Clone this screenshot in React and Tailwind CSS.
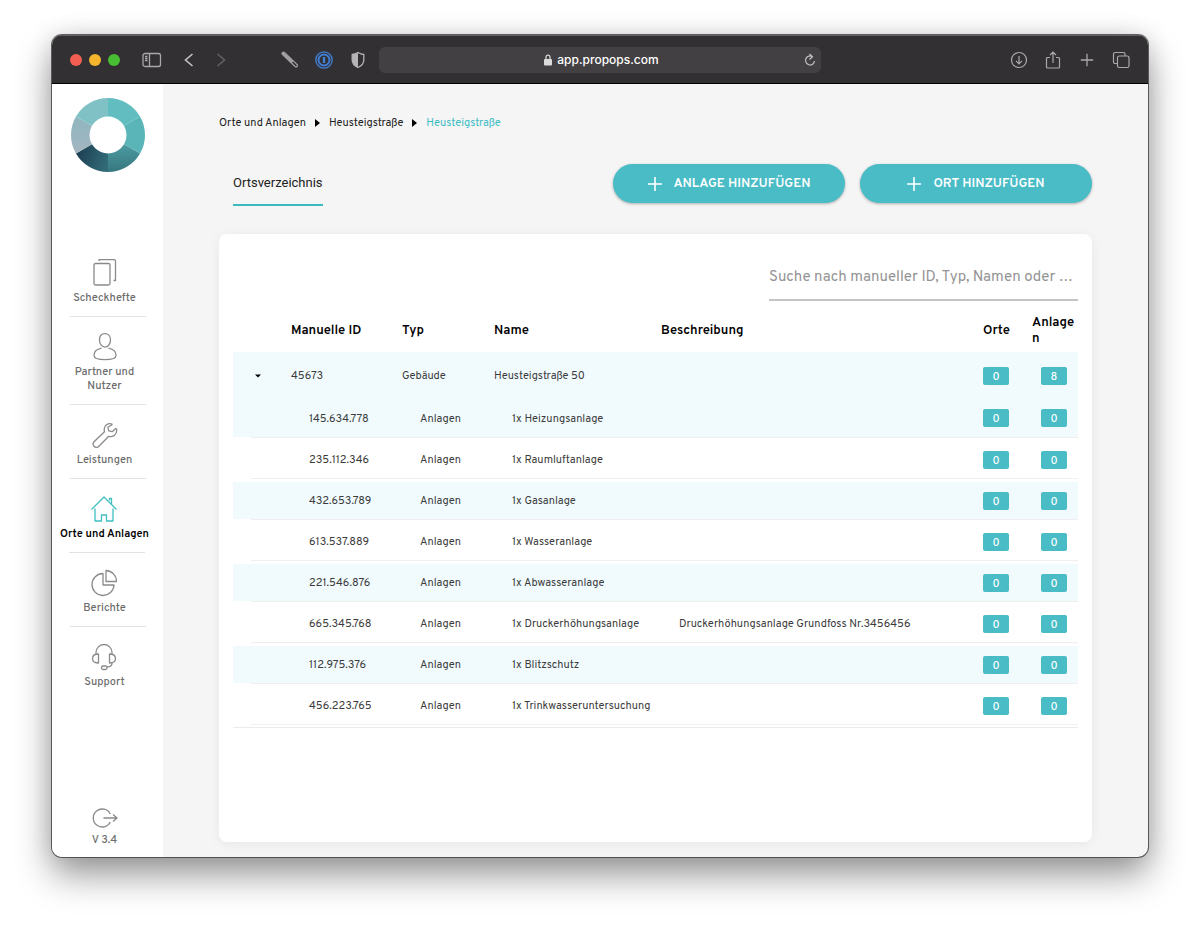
import { useState } from "react"

const navItems = [
    { label: "Scheckhefte", icon: "booklets" },
    { label: "Partner und Nutzer", icon: "person" },
    { label: "Leistungen", icon: "wrench" },
    { label: "Orte und Anlagen", icon: "house", active: true },
    { label: "Berichte", icon: "pie" },
    { label: "Support", icon: "headset" },
]

const assets = [
    { id: "145.634.778", name: "1x Heizungsanlage" },
    { id: "235.112.346", name: "1x Raumluftanlage" },
    { id: "432.653.789", name: "1x Gasanlage" },
    { id: "613.537.889", name: "1x Wasseranlage" },
    { id: "221.546.876", name: "1x Abwasseranlage" },
    { id: "665.345.768", name: "1x Druckerhöhungsanlage", description: "Druckerhöhungsanlage Grundfoss Nr.3456456" },
    { id: "112.975.376", name: "1x Blitzschutz" },
    { id: "456.223.765", name: "1x Trinkwasseruntersuchung" },
]

const iconPaths = {
    booklets: (
        <>
            <rect x="3" y="4.500" width="16" height="21.500" rx="1.500" />
            <path d="M8 2V.7h15a1.500 1.500 0 0 1 1.500 1.500V21.500h-2" />
        </>
    ),
    person: (
        <>
            <path d="M14 .7c3.300 0 5.500 2.600 5.500 6.200S17.200 14.200 14 14.200 8.500 10.700 8.500 6.900 10.700.7 14 .7z" />
            <path d="M10.500 15.200C6 16.200 3 18.700 3 22.200 3 25.200 8 26.700 14 26.700s11-1.500 11-4.500c0-3.500-3-6-7.500-7" />
        </>
    ),
    wrench: <path d="M21 3c-4-1.500-8 1.500-7.800 5.500 0 1 .2 1.600.3 2.200L3.300 20.500c-1.500 1.500-1.500 3.500-.3 4.800 1.400 1.400 3.600 1.300 4.900-.1L17.500 15.500c4.500 1 8.700-2 8.200-7.500l-1-.5-3.500 3.200-3.400-.9-1-3.600L21 3.800z" />,
    house: (
        <>
            <path d="M1.500 14.500 14 2l12.500 12.500M19.500 5.500V3.500h2v5.500" />
            <path d="M5 13.500V26h6.500v-6h5v6H23V13.500" />
        </>
    ),
    pie: (
        <>
            <path d="M13 4.500A11 11 0 1 0 24 16H13z" />
            <path d="M16 1.500V12.500h10.500A11 11 0 0 0 16 1.500z" />
        </>
    ),
    headset: (
        <>
            <path d="M6 11.500V9.500a8 8 0 0 1 16 0v2" />
            <path d="M8.500 11v9C5 20 2.500 18.500 2.500 15.500S5 11 8.500 11zM19.500 11v9c3.500 0 6-1.500 6-4.500S23 11 19.500 11z" />
            <path d="M22 20c0 2.500-1.500 4-5 4" />
            <rect x="11.500" y="23" width="5.500" height="3.500" rx="1.500" />
        </>
    ),
    logout: (
        <>
            <path d="M19.300 9a9 9 0 1 0 0 8" />
            <path d="M12.500 13H26M22 9.500 26 13l-4 3.500" />
        </>
    ),
}

const Icon = ({ name }) => (
    <svg viewBox="0 0 28 28" className="size-7" fill="none" stroke="currentColor" strokeWidth="1.300" strokeLinejoin="round" aria-hidden="true">
        {iconPaths[name]}
    </svg>
)

const Logo = () => (
    <svg viewBox="-37 -37 74 74" className="size-[74px]" role="img" aria-label="PropOps">
        <defs>
            <linearGradient id="deep" x1="0" y1="0" x2="0" y2="1">
                <stop offset="0" stopColor="#52a7ac" />
                <stop offset="1" stopColor="#37777f" />
            </linearGradient>
            <linearGradient id="navy" x1="0" y1="0.300" x2="1" y2="0.700">
                <stop offset="0" stopColor="#1b3b50" />
                <stop offset="1" stopColor="#326b78" />
            </linearGradient>
            <linearGradient id="mist" x1="0" y1="0" x2="0" y2="1">
                <stop offset="0" stopColor="#8fb6bf" />
                <stop offset="1" stopColor="#a3b5c0" />
            </linearGradient>
        </defs>
        <path d="M0 0V-37A37 37 0 0 1 32.040-18.500z" fill="#62bdc1" />
        <path d="M0 0 32.040-18.500A37 37 0 0 1 32.040 18.500z" fill="#5ab5b8" />
        <path d="M0 0 32.040 18.500A37 37 0 0 1 0 37z" fill="url(#deep)" />
        <path d="M0 0V37A37 37 0 0 1-32.040 18.500z" fill="url(#navy)" />
        <path d="M0 0-32.040 18.500A37 37 0 0 1-32.040-18.500z" fill="url(#mist)" />
        <path d="M0 0-32.040-18.500A37 37 0 0 1 0-37z" fill="#80c1c5" />
        <circle r="18.500" fill="#fff" />
    </svg>
)

const BrowserBar = () => (
    <div className="flex h-[49px] items-center border-t border-b border-t-[#626062] border-b-black bg-[#333033] text-[#aaa8aa]">
        <div className="flex flex-1 items-center pl-[18px]">
            <div className="flex gap-[7px]">
                <span className="size-3 rounded-full bg-[#f25e52]" />
                <span className="size-3 rounded-full bg-[#f5b62e]" />
                <span className="size-3 rounded-full bg-[#48be33]" />
            </div>
            <button aria-label="Seitenleiste" className="ml-[22px]">
                <svg viewBox="0 0 20 16" className="h-4 w-5" fill="none" stroke="currentColor" strokeWidth="1.300">
                    <rect x="1" y="1.500" width="17.500" height="13" rx="2" />
                    <path d="M7.500 1.500v13M3 4.500h2.500M3 6.500h2.500M3 8.500h2.500" />
                </svg>
            </button>
            <button aria-label="Zurück" className="ml-[22px]">
                <svg viewBox="0 0 10 16" className="h-4 w-[10px]" fill="none" stroke="#c5c3c5" strokeWidth="1.600">
                    <path d="m8.500 2-7 6 7 6" />
                </svg>
            </button>
            <button aria-label="Vorwärts" className="ml-[22px]">
                <svg viewBox="0 0 10 16" className="h-4 w-[10px]" fill="none" stroke="#626062" strokeWidth="1.600">
                    <path d="m1.500 2 7 6-7 6" />
                </svg>
            </button>
            <div className="ml-auto flex items-center gap-4 pr-3">
                <svg viewBox="0 0 18 18" className="size-[18px]" aria-hidden="true">
                    <path d="m2.500 2.500 12.500 12" stroke="#a09ea0" strokeWidth="4" strokeLinecap="round" />
                    <path d="m12 11.500 3 3" stroke="#333033" strokeWidth="1.600" strokeLinecap="round" />
                </svg>
                <svg viewBox="0 0 18 18" className="size-[18px]" fill="none" stroke="#417fd6" aria-hidden="true">
                    <circle cx="9" cy="9" r="8.200" strokeWidth="1.300" />
                    <circle cx="9" cy="9" r="5.500" strokeWidth="2" />
                    <path d="M9 6v6" strokeWidth="2.400" />
                </svg>
                <svg viewBox="0 0 18 18" className="size-[18px]" aria-hidden="true">
                    <path d="M9 1.500c2 1.200 4 1.800 5.800 2v5.500c0 3.500-2.500 6-5.800 7.500-3.300-1.500-5.800-4-5.800-7.500V3.500c1.800-.2 3.800-.8 5.800-2z" fill="none" stroke="#b5b3b5" strokeWidth="1.300" />
                    <path d="M9 1.500v15c-3.300-1.500-5.800-4-5.800-7.500V3.500c1.800-.2 3.800-.8 5.800-2z" fill="#b5b3b5" />
                </svg>
            </div>
        </div>
        <div className="flex h-[26px] w-[442px] items-center rounded-md bg-[#434043] pr-[5px] pl-5 text-white">
            <div className="flex flex-1 items-center justify-center gap-[5px]">
                <svg viewBox="0 0 8 12" className="h-3 w-2" aria-hidden="true">
                    <rect y="5" width="8" height="6.500" rx="1" fill="#dddcdd" />
                    <path d="M2 5V3.200a2 2 0 0 1 4 0V5" fill="none" stroke="#dddcdd" strokeWidth="1.200" />
                </svg>
                <span className="font-['Inter',sans-serif] text-[12px] font-medium">app.propops.com</span>
            </div>
            <button aria-label="Neu laden">
                <svg viewBox="0 0 12 14" className="h-[14px] w-3" fill="none" stroke="#c5c3c5" strokeWidth="1.200">
                    <path d="M8.500 3.700A4.500 4.500 0 1 0 10.500 8M5.500 1l3 2.800-3 2.700" />
                </svg>
            </button>
        </div>
        <div className="flex flex-1 items-center justify-end gap-4 pr-[18px]">
            <button aria-label="Downloads">
                <svg viewBox="0 0 18 18" className="size-[18px]" fill="none" stroke="currentColor" strokeWidth="1.200">
                    <circle cx="9" cy="9" r="7.500" />
                    <path d="M9 5v7.500M6 9.800l3 3 3-3" />
                </svg>
            </button>
            <button aria-label="Teilen">
                <svg viewBox="0 0 18 18" className="size-[18px]" fill="none" stroke="currentColor" strokeWidth="1.200">
                    <path d="M6 6.500H3.500A1 1 0 0 0 2.500 7.500v8.500a1 1 0 0 0 1 1h11a1 1 0 0 0 1-1V7.500a1 1 0 0 0-1-1H12M9 12V1M6 4l3-3 3 3" />
                </svg>
            </button>
            <button aria-label="Neuer Tab">
                <svg viewBox="0 0 18 18" className="size-[18px]" fill="none" stroke="currentColor" strokeWidth="1.300">
                    <path d="M9 2.800v12.400M2.800 9h12.400" />
                </svg>
            </button>
            <button aria-label="Tabs anzeigen">
                <svg viewBox="0 0 18 18" className="size-[18px]" fill="none" stroke="currentColor" strokeWidth="1.200">
                    <rect x="5.500" y="5" width="11.500" height="11.500" rx="1.800" />
                    <path d="M5.500 12.500H3A1.500 1.500 0 0 1 1.500 11V3A1.500 1.500 0 0 1 3 1.500h8.500A1.500 1.500 0 0 1 13 3v2" />
                </svg>
            </button>
        </div>
    </div>
)

const Sidebar = () => (
    <aside className="flex w-[111px] shrink-0 flex-col bg-white pt-[14px] pb-[10px]">
        <div className="flex justify-center">
            <Logo />
        </div>
        <nav className="mt-[71px] flex flex-col items-center">
            {navItems.map((item) => (
                <a
                    key={item.label}
                    href="#"
                    className={`group flex flex-col items-center pt-4 text-center text-[11px] leading-[14px] ${item.active ? "font-semibold text-black" : "font-medium text-[#6b6b6b]"}`}
                >
                    <span className="flex flex-col items-center gap-1 pr-[6px]">
                        <span className={item.active ? "text-[#3fbfc0]" : "text-[#8a8a8a]"}>
                            <Icon name={item.icon} />
                        </span>
                        <span className={item.active ? "whitespace-nowrap" : "max-w-20"}>{item.label}</span>
                    </span>
                    <span className="mt-[11px] h-px w-[76px] bg-[#e2e2e2] group-last:hidden" />
                </a>
            ))}
        </nav>
        <a href="#" className="mt-auto flex flex-col items-center pr-[6px] text-[11px] leading-[14px] font-medium text-[#6b6b6b]">
            <span className="text-[#8a8a8a]">
                <Icon name="logout" />
            </span>
            V 3.4
        </a>
    </aside>
)

const AddButton = ({ children }) => (
    <button className="flex h-[39px] w-[232px] items-center justify-center gap-3 rounded-full bg-[#49bcc6] text-[13px] font-semibold text-white shadow-[0_1px_3px_rgba(0,0,0,0.3)]">
        <svg viewBox="0 0 14 14" className="size-[14px]" stroke="currentColor" strokeWidth="1.600" aria-hidden="true">
            <path d="M7 0v14M0 7h14" />
        </svg>
        <span className="pt-[3px]">{children}</span>
    </button>
)

const Count = ({ value }) => (
    <span className="block h-[18px] w-[26px] rounded-xs bg-[#49bcc6] text-center text-[11px] leading-5 font-medium text-white">
        {value}
    </span>
)

// Shaded rows leave a small white strip above themselves; only the first one
// joins directly onto its parent row.
const AssetRow = ({ asset, index }) => {
    const shade = index % 2 === 0 ? "bg-[#f1fbfe]" : "bg-white"
    const gap = index === 0 ? "h-[39px]" : "h-[41px] border-t-[3px] border-t-transparent"
    const blank = `${shade} ${gap} border-b border-b-transparent bg-clip-padding`
    const cell = `${shade} ${gap} border-b border-b-[#efefef] bg-clip-padding`

    return (
        <tr>
            <td className={blank} />
            <td className={cell} />
            <td className={`${cell} pt-[2px] pl-[18px]`}>{asset.id}</td>
            <td className={`${cell} pt-[2px] pl-[18px]`}>Anlagen</td>
            <td className={`${cell} pt-[2px] pl-[18px] whitespace-nowrap`}>{asset.name}</td>
            <td className={`${cell} pt-[2px] pl-[18px]`}>{asset.description}</td>
            <td className={cell}><Count value={0} /></td>
            <td className={`${cell} pl-[9px]`}><Count value={0} /></td>
        </tr>
    )
}

const PlacesTable = () => {
    const [open, setOpen] = useState(true)

    return (
        <table className="w-full table-fixed border-separate border-spacing-0 border-b border-b-[#ebebeb] pb-[2px] text-left text-[11px] text-[#3c3c3c]">
            <colgroup>
                <col className="w-[18px]" />
                <col className="w-[40px]" />
                <col className="w-[111px]" />
                <col className="w-[92px]" />
                <col className="w-[167px]" />
                <col />
                <col className="w-[49px]" />
                <col className="w-[46px]" />
            </colgroup>
            <thead className="text-[13px] leading-4 text-black">
                <tr className="h-[43px]">
                    <td colSpan={2} />
                    <th className="font-semibold">Manuelle ID</th>
                    <th className="font-semibold">Typ</th>
                    <th className="font-semibold">Name</th>
                    <th className="font-semibold">Beschreibung</th>
                    <th className="font-semibold">Orte</th>
                    <th className="font-semibold break-all">Anlagen</th>
                </tr>
            </thead>
            <tbody>
                <tr className="h-[47px] bg-[#f1fbfe]">
                    <td />
                    <td>
                        <button aria-label="Anlagen ein- oder ausklappen" onClick={() => setOpen(!open)} className="flex size-[14px] items-center justify-center">
                            <svg viewBox="0 0 6 4" className="h-1 w-[6px]" fill="#000">
                                <path d="M0 .5h6L3 3.500z" />
                            </svg>
                        </button>
                    </td>
                    <td className="pt-[2px]">45673</td>
                    <td className="pt-[2px]">Gebäude</td>
                    <td className="pt-[2px]">Heusteigstraße 50</td>
                    <td />
                    <td><Count value={0} /></td>
                    <td className="pl-[9px]"><Count value={8} /></td>
                </tr>
                {open && assets.map((asset, index) => <AssetRow key={asset.id} asset={asset} index={index} />)}
            </tbody>
        </table>
    )
}

const Separator = () => (
    <svg viewBox="0 0 5 8" className="h-2 w-[5px]" aria-hidden="true">
        <path d="M0 0 5 4 0 8z" />
    </svg>
)

const App = () => (
    <div className="bg-white px-[52px] pt-[35px] pb-[68px] font-['Overpass','Inter',sans-serif]">
        <div className="overflow-hidden rounded-[10px] bg-[#f5f5f5] shadow-[0_0_0_1px_rgba(60,60,60,0.8),0_18px_36px_rgba(0,0,0,0.4),0_0_24px_rgba(0,0,0,0.12)]">
            <BrowserBar />
            <div className="flex">
                <Sidebar />
                <main className="min-w-0 flex-1 pt-[29px] pr-14 pb-[15px] pl-14">
                    <nav className="flex items-center gap-[9px] text-[11px] leading-5 text-[#222]">
                        <a href="#">Orte und Anlagen</a>
                        <Separator />
                        <a href="#">Heusteigstraße</a>
                        <Separator />
                        <a href="#" className="text-[#3dbdc4]">Heusteigstraße</a>
                    </nav>
                    <div className="mt-[31px] flex items-start justify-between pl-[14px]">
                        <a href="#" className="border-b-2 border-[#3cb9bf] pt-[9px] pb-[11px] font-['Roboto',sans-serif] text-[13px] leading-5 text-[#222]">
                            Ortsverzeichnis
                        </a>
                        <div className="flex gap-[15px]">
                            <AddButton>ANLAGE HINZUFÜGEN</AddButton>
                            <AddButton>ORT HINZUFÜGEN</AddButton>
                        </div>
                    </div>
                    <section className="mt-7 min-h-[608px] rounded-lg bg-white px-[14px] pt-[19px] shadow-[0_2px_12px_rgba(0,0,0,0.06)]">
                        <div className="mb-2 flex justify-end">
                            <input
                                type="text"
                                aria-label="Suche"
                                placeholder="Suche nach manueller ID, Typ, Namen oder …"
                                className="h-12 w-[309px] border-b-2 border-[#c4c4c4] pt-[2px] text-[15px] outline-none placeholder:text-[#949494]"
                            />
                        </div>
                        <PlacesTable />
                    </section>
                </main>
            </div>
        </div>
    </div>
)

export default App
